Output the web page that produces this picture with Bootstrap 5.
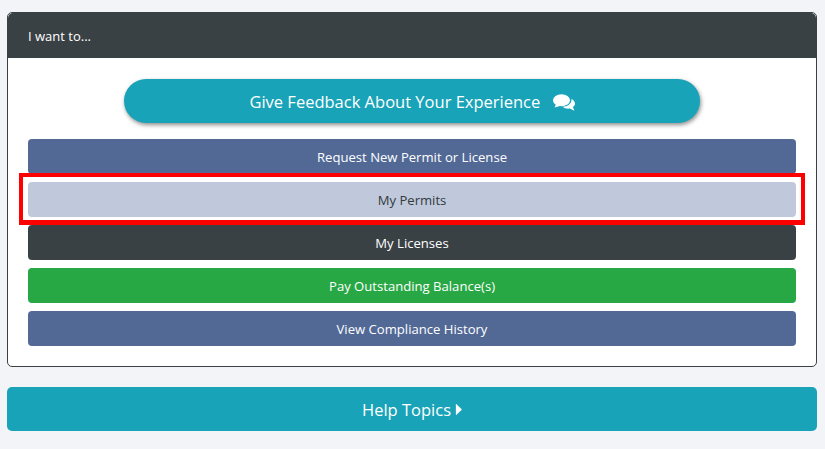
<!DOCTYPE html>
<html lang="en">
<head>
    <meta charset="UTF-8">
    <meta name="viewport" content="width=device-width, initial-scale=1.0">
    <title>I want to</title>
    <link rel="stylesheet" href="https://cdn.jsdelivr.net/npm/bootstrap@5.3.0/dist/css/bootstrap.min.css">
    <style>
        body {
            background: #f2f4f8;
            font-family: "Open Sans", "Noto Sans", sans-serif;
            padding: 12px 8px 0 7px;
        }
        .want-card {
            border: 1px solid #3a4145;
            border-radius: 5px;
            height: 355px;
        }
        .want-card .card-header {
            background: #3a4145;
            color: #fff;
            font-size: 13px;
            height: 45px;
            line-height: 46px;
            padding: 0 20px;
            border: 0;
        }
        .want-card .card-body {
            padding: 21px 20px 0;
        }
        .feedback-btn {
            display: block;
            width: 576px;
            height: 44px;
            margin: 0 auto 16px;
            padding: 0;
            background: #19a3b8;
            color: #fff;
            font-size: 16.5px;
            line-height: 45px;
            border: 0;
            border-radius: 22px;
            box-shadow: 1px 2px 4px rgba(0, 0, 0, .45);
        }
        .feedback-icon {
            vertical-align: -3px;
        }
        .action-list {
            gap: 8px;
        }
        .action-btn {
            width: 100%;
            height: 35px;
            padding: 0;
            font-size: 13.1px;
            line-height: 37px;
            color: #fff;
            border: 0;
            border-radius: 4px;
        }
        .action-blue { background: #526996; }
        .action-pale { background: #bfc9db; color: #33393d; }
        .action-dark { background: #3a4145; }
        .action-green { background: #28a745; }
        .marked-item::after {
            content: "";
            position: absolute;
            inset: -9px -9px -8px;
            border: 4px solid #f00;
            border-bottom-width: 5px;
            pointer-events: none;
        }
        .help-btn {
            width: 100%;
            height: 44px;
            margin-top: 20px;
            padding: 0;
            background: #19a3b8;
            color: #fff;
            font-size: 16.5px;
            line-height: 46px;
            border: 0;
            border-radius: 5px;
        }
        .help-btn:hover, .feedback-btn:hover, .action-btn:hover { color: #fff; }
        .action-pale:hover { color: #33393d; }
    </style>
</head>
<body>

<div class="card want-card overflow-hidden">
    <div class="card-header">I want to...</div>
    <div class="card-body">
        <a href="#" class="btn feedback-btn">Give Feedback About Your Experience
            <svg class="ms-2 feedback-icon" width="22" height="17" viewBox="0 0 22 17" fill="#fff" aria-hidden="true">
                <ellipse cx="8.5" cy="6.2" rx="8.5" ry="6"/>
                <path d="M3.5 9 L1.5 13.6 L8 11.7 Z"/>
                <path d="M18.4 5 C20.6 6 22 7.6 22 9.5 C22 10.9 21.2 12.1 19.9 13 L21.4 16.8 L16.8 14.6 C14 15 11 14.1 9.4 12.7 C14.4 12.8 19 9.8 18.4 5 Z"/>
            </svg>
        </a>
        <div class="d-flex flex-column action-list">
            <a href="#" class="btn action-btn action-blue">Request New Permit or License</a>
            <div class="position-relative marked-item">
                <a href="#" class="btn action-btn action-pale d-block">My Permits</a>
            </div>
            <a href="#" class="btn action-btn action-dark">My Licenses</a>
            <a href="#" class="btn action-btn action-green">Pay Outstanding Balance(s)</a>
            <a href="#" class="btn action-btn action-blue">View Compliance History</a>
        </div>
    </div>
</div>

<a href="#" class="btn help-btn d-block">Help Topics<svg class="ms-1 align-baseline" width="7" height="13" viewBox="0 0 8 13" fill="#fff" aria-hidden="true"><path d="M1 .8 Q1 0 1.7 .5 L7.4 5.8 Q8 6.5 7.4 7.2 L1.7 12.5 Q1 13 1 12.2 Z"/></svg></a>

<script src="https://cdn.jsdelivr.net/npm/bootstrap@5.3.0/dist/js/bootstrap.bundle.min.js"></script>
</body>
</html>
